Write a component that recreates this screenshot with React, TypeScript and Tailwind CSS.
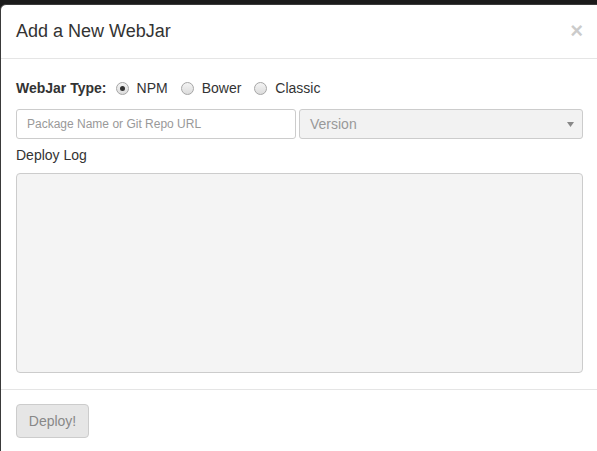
import React from "react";

const Radio: React.FC<{ checked?: boolean; label: string }> = ({ checked, label }) => (
  <label className="flex items-center">
    <span className="flex h-[13px] w-[13px] items-center justify-center rounded-full border border-[#a6a6a6] bg-gradient-to-b from-[#f4f4f4] to-[#dcdcdc]">
      {checked && <span className="h-[5px] w-[5px] rounded-full bg-[#333]"></span>}
    </span>
    <span className="ml-[8px] text-[14px] text-[#333]">{label}</span>
  </label>
);

export default function App() {
  return (
    <div className="h-[451px] w-[597px] overflow-hidden bg-[#1b1b1b] pt-[4px] font-['Liberation_Sans',Arial,sans-serif] text-[#333]">
      <div className="w-[599px] rounded-tl-[6px] border border-[#3a3a3a] bg-white">
        {/* Header */}
        <div className="flex items-center justify-between border-b border-[#e5e5e5] px-[15px] pt-[13px] pb-[14px]">
          <h4 className="text-[18px] leading-[26px] text-[#333]">Add a New WebJar</h4>
          <span className="mr-[0px] text-[22px] font-bold leading-none text-black opacity-20">×</span>
        </div>

        {/* Body */}
        <div className="border-b border-[#e5e5e5] px-[15px] pt-[19px] pb-[16px]">
          <div className="flex h-[20px] items-center">
            <span className="mr-[9px] text-[14px] font-bold">WebJar Type:</span>
            <Radio checked label="NPM" />
            <span className="w-[13px]"></span>
            <Radio label="Bower" />
            <span className="w-[13px]"></span>
            <Radio label="Classic" />
          </div>

          <div className="mt-[11px] flex gap-[3px]">
            <input
              className="h-[30px] w-[280px] rounded-[3px] border border-[#ccc] px-[10px] text-[12px] outline-none placeholder:text-[#999]"
              placeholder="Package Name or Git Repo URL"
            />
            <div className="flex h-[30px] flex-1 items-center justify-between rounded-[3px] border border-[#ccc] bg-[#f2f2f2] pl-[10px] pr-[8px]">
              <span className="text-[14px] text-[#999]">Version</span>
              <svg width="7" height="5" viewBox="0 0 7 5">
                <path d="M0 0h7L3.5 5z" fill="#888" />
              </svg>
            </div>
          </div>

          <div className="mt-[6px] h-[20px] text-[14px] leading-[20px]">Deploy Log</div>

          <div className="mt-[8px] h-[200px] rounded-[4px] border border-[#ccc] bg-[#f4f4f4]"></div>
        </div>

        {/* Footer */}
        <div className="px-[15px] pt-[14px] pb-[20px]">
          <button className="h-[34px] w-[73px] rounded-[4px] border border-[#ccc] bg-[#e6e6e6] text-[14px] text-[#888]">
            Deploy!
          </button>
        </div>
      </div>
    </div>
  );
}
